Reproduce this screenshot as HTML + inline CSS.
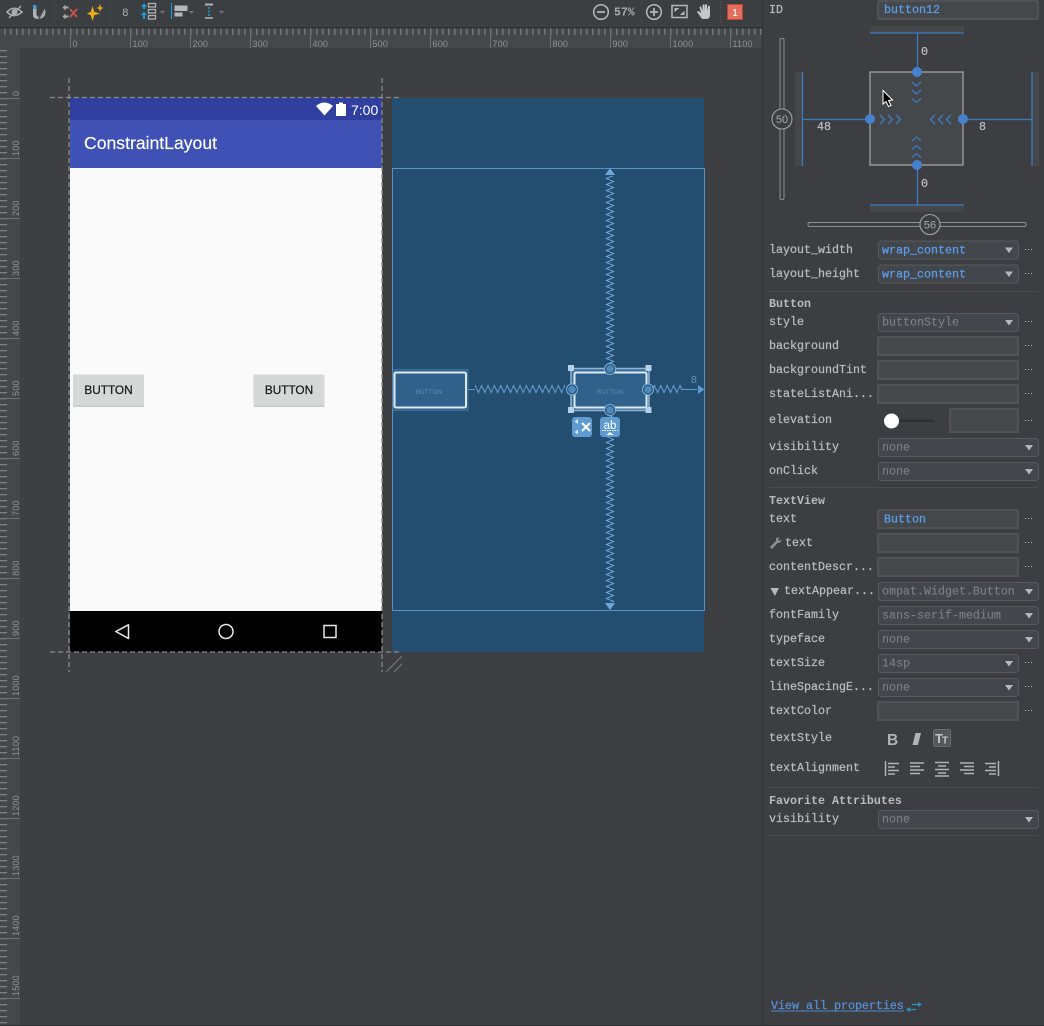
<!DOCTYPE html>
<html><head><meta charset="utf-8"><title>ConstraintLayout</title>
<style>
html,body{margin:0;padding:0;background:#3e3f43;width:1044px;height:1026px;overflow:hidden}
svg{display:block;filter:blur(.3px)}
text{font-family:"Liberation Sans",sans-serif}
.m text,text.m{font-family:"Liberation Mono",monospace;font-size:11.67px}
text.mf{font-family:"Liberation Mono",monospace}
.l{fill:#b9bbbd;stroke:#b9bbbd;stroke-width:.25}
.h{fill:#b9bbbd;font-weight:bold}
.b{fill:#5b9be8;stroke:#5b9be8;stroke-width:.3}
.g{fill:#7b7d7f;stroke:#7b7d7f;stroke-width:.2}
.r{font-size:9px;fill:#8f9294;letter-spacing:.2px}
.dd{fill:#43464a;stroke:#57595b;stroke-width:1}
.in{fill:#45484a;stroke:#505256;stroke-width:2}
.dots{stroke:#b5b7b9;stroke-width:1;stroke-dasharray:1 2}
.sep{stroke:#494b4e;stroke-width:1}
.ic{fill:none;stroke:#b5b7b9;stroke-width:1.5}
.ch{fill:none;stroke:#3f79bf;stroke-width:1.4}
.blue{stroke:#3f79bf;stroke-width:1.3}
</style></head>
<body>
<svg xmlns="http://www.w3.org/2000/svg" width="1044" height="1026" viewBox="0 0 1044 1026">
<defs>
<pattern id="tt" x="4" y="28" width="6" height="20" patternUnits="userSpaceOnUse"><rect x="0" y="0" width="1.5" height="7" fill="#74777a"/></pattern>
<pattern id="tl" x="0" y="2" width="20" height="6" patternUnits="userSpaceOnUse"><rect x="0" y="0" width="7" height="1.3" fill="#7d8082"/></pattern>
<pattern id="zh" x="0" y="384" width="6.4" height="10" patternUnits="userSpaceOnUse"><path d="M0 5 L1.6 1.500 L4.800 8.500 L6.400 5" fill="none" stroke="#6199cd" stroke-width="1.100"/></pattern>
<pattern id="zv" x="605" y="0" width="10" height="6" patternUnits="userSpaceOnUse"><path d="M5 0 L8.500 1.500 L1.500 4.500 L5 6" fill="none" stroke="#6ea6d8" stroke-width="1"/></pattern>
</defs>

<rect width="1044" height="1026" fill="#3e3f43"/>

<!-- toolbar -->
<rect width="763" height="27" fill="#3c3f41"/>
<rect y="27" width="763" height="1.5" fill="#2e3032"/>

<!-- eye -->
<path d="M7 12 Q14 4.5 22 12 Q14 19 7 12Z" fill="none" stroke="#a9abad" stroke-width="1.6"/>
<circle cx="14.500" cy="12" r="3" fill="#a9abad"/>
<path d="M9 18 L21 6" stroke="#a9abad" stroke-width="1.5"/>
<!-- pen -->
<rect x="33" y="5" width="3.500" height="4" fill="#3d9ad6"/>
<path d="M33 9 H36.500 V15 L40 19 Q33 19.500 33 15Z" fill="#b0b2b4"/>
<path d="M38 18.500 L44.500 8 Q46.500 13 44.500 16 Q42 19.500 38 18.500Z" fill="#a6a8aa"/>
<path d="M38.500 19.500 L45.500 6" stroke="#3c3f41" stroke-width="1"/>
<!-- clear constraints -->
<g fill="#a6a8aa"><path d="M62.500 7.500 L65.500 4.500 V6.500 H68.500 V8.500 H65.500 V10.500Z"/><path d="M62.500 16.500 L65.500 13.500 V15.500 H68.500 V17.500 H65.500 V19.500Z"/></g>
<path d="M70 9 L77 17 M77 9 L70 17" stroke="#c75450" stroke-width="1.900"/>
<!-- sparkle -->
<path d="M92.500 6 L94.300 11.700 L100 13.500 L94.300 15.300 L92.500 21 L90.700 15.300 L87 13.500 L90.700 11.700Z" fill="#e8a91c"/>
<path d="M100 4 L101 7 L103.500 8 L101 9 L100 12 L99 9 L96.500 8 L99 7Z" fill="#e8a91c"/>
<text class="mf" x="122" y="16" style="font-size:11px" fill="#b0b2b4">8</text>
<!-- margin list -->
<g fill="#1b9ce0"><path d="M141 7 L144 3 L147 7 H145 V9 H143 V7Z"/><path d="M141 15 L144 11.500 L147 15 H145 V19 H143 V15Z"/></g>
<g fill="none" stroke="#aeb0b2" stroke-width="1.300"><rect x="148.500" y="3.500" width="7" height="3.500"/><rect x="148.500" y="9.500" width="7" height="3.500"/><rect x="148.500" y="15.500" width="7" height="3.500"/></g>
<path d="M160 11 H165 L162.500 13.500Z" fill="#77797b"/>
<!-- align -->
<rect x="171" y="3" width="1" height="16" fill="#1b9ce0"/>
<rect x="174.500" y="5.500" width="13" height="5.500" fill="#b5b7b9"/>
<rect x="174.500" y="12.500" width="8" height="4" fill="#b5b7b9"/>
<path d="M189 11 H194 L191.500 13.500Z" fill="#77797b"/>
<!-- pack -->
<rect x="205" y="3.500" width="8" height="2" fill="#b0b2b4"/>
<rect x="205" y="17" width="8" height="2" fill="#989a9c"/>
<path d="M209 7 V16" stroke="#1b9ce0" stroke-width="1.500" stroke-dasharray="2 1.500"/>
<path d="M219 11 H224 L221.500 13.500Z" fill="#77797b"/>
<g stroke="#515355" stroke-dasharray="1 2"><path d="M54.500 1 V24"/><path d="M110.500 1 V24"/><path d="M720.500 1 V24"/></g>

<!-- zoom tools -->
<circle cx="601" cy="12" r="7.300" class="ic"/><path d="M597 12 H605" stroke="#b5b7b9" stroke-width="1.700"/>
<text class="mf" x="614" y="15.500" style="font-size:11.500px;font-weight:bold" fill="#a9abad">57%</text>
<circle cx="654" cy="12" r="7.300" class="ic"/><path d="M650 12 H658 M654 8 V16" stroke="#b5b7b9" stroke-width="1.700"/>
<rect x="672" y="5.500" width="15" height="12" class="ic"/><path d="M675 11 V8.500 H678Z M684 12 V14.500 H681Z" fill="#b5b7b9" stroke="#b5b7b9"/>
<path d="M700 9 Q699 6 701 6.500 L702.500 11 V5 Q703.500 3.500 704.500 5 V11 L705 4.500 Q706 3.500 707 5 V11 L708 6 Q709 5 710 6.500 V15 Q710 19 706 19 H703.500 Q701.500 19 700 16 L697 12 Q697 10.500 699 11.500 L701 13Z" fill="#c4c6c8"/>
<rect x="727.500" y="4.500" width="15" height="15" fill="#e2705f" stroke="#c4412f"/>
<text x="735" y="16" text-anchor="middle" style="font-size:10.500px" fill="#fff">1</text>

<!-- top ruler -->
<rect y="28.500" width="763" height="19.500" fill="#45484a"/>
<rect y="28.500" width="763" height="7" fill="url(#tt)"/>
<g fill="#6f7274">
<rect x="70" y="28" width="1" height="20"/><rect x="130" y="28" width="1" height="20"/><rect x="190" y="28" width="1" height="20"/><rect x="250" y="28" width="1" height="20"/><rect x="310" y="28" width="1" height="20"/><rect x="370" y="28" width="1" height="20"/><rect x="430" y="28" width="1" height="20"/><rect x="490" y="28" width="1" height="20"/><rect x="550" y="28" width="1" height="20"/><rect x="610" y="28" width="1" height="20"/><rect x="670" y="28" width="1" height="20"/><rect x="730" y="28" width="1" height="20"/>
</g>
<g class="r">
<text class="r" x="72.500" y="47">0</text><text class="r" x="132.500" y="47">100</text><text class="r" x="192.500" y="47">200</text><text class="r" x="252.500" y="47">300</text><text class="r" x="312.500" y="47">400</text><text class="r" x="372.500" y="47">500</text><text class="r" x="432.500" y="47">600</text><text class="r" x="492.500" y="47">700</text><text class="r" x="552.500" y="47">800</text><text class="r" x="612.500" y="47">900</text><text class="r" x="672.500" y="47">1000</text><text class="r" x="732.500" y="47">1100</text>
</g>

<!-- left ruler -->
<rect y="48" width="20" height="978" fill="#45484a"/>
<rect y="48" width="20" height="978" fill="url(#tl)"/>
<g fill="#6f7274">
<rect x="0" y="98" width="20" height="1"/><rect x="0" y="158" width="20" height="1"/><rect x="0" y="218" width="20" height="1"/><rect x="0" y="278" width="20" height="1"/><rect x="0" y="338" width="20" height="1"/><rect x="0" y="398" width="20" height="1"/><rect x="0" y="458" width="20" height="1"/><rect x="0" y="518" width="20" height="1"/><rect x="0" y="578" width="20" height="1"/><rect x="0" y="638" width="20" height="1"/><rect x="0" y="698" width="20" height="1"/><rect x="0" y="758" width="20" height="1"/><rect x="0" y="818" width="20" height="1"/><rect x="0" y="878" width="20" height="1"/><rect x="0" y="938" width="20" height="1"/><rect x="0" y="998" width="20" height="1"/>
</g>
<text class="r" transform="translate(19,96) rotate(-90)">0</text>
<text class="r" transform="translate(19,156) rotate(-90)">100</text>
<text class="r" transform="translate(19,216) rotate(-90)">200</text>
<text class="r" transform="translate(19,276) rotate(-90)">300</text>
<text class="r" transform="translate(19,336) rotate(-90)">400</text>
<text class="r" transform="translate(19,396) rotate(-90)">500</text>
<text class="r" transform="translate(19,456) rotate(-90)">600</text>
<text class="r" transform="translate(19,516) rotate(-90)">700</text>
<text class="r" transform="translate(19,576) rotate(-90)">800</text>
<text class="r" transform="translate(19,636) rotate(-90)">900</text>
<text class="r" transform="translate(19,696) rotate(-90)">1000</text>
<text class="r" transform="translate(19,756) rotate(-90)">1100</text>
<text class="r" transform="translate(19,816) rotate(-90)">1200</text>
<text class="r" transform="translate(19,876) rotate(-90)">1300</text>
<text class="r" transform="translate(19,936) rotate(-90)">1400</text>
<text class="r" transform="translate(19,996) rotate(-90)">1500</text>

<!-- phone -->
<rect x="70" y="98" width="312" height="22" fill="#303f9f"/>
<rect x="70" y="120" width="312" height="48" fill="#3f51b5"/>
<rect x="70" y="168" width="312" height="443" fill="#fafafa"/>
<rect x="70" y="611" width="312" height="41" fill="#000"/>
<path d="M316 106 Q324 99 333 106 L324.500 115.500Z" fill="#fff"/>
<rect x="336" y="104" width="10" height="12" fill="#fff"/><rect x="339" y="102.500" width="4" height="2" fill="#fff"/>
<text x="351" y="115" style="font-size:14px" fill="#fff">7:00</text>
<text x="84" y="149" style="font-size:17.600px" fill="#fff" stroke="#fff" stroke-width=".15">ConstraintLayout</text>

<rect x="73" y="374.500" width="71" height="32.500" rx="1.500" fill="#c8c9c9"/>
<rect x="73" y="374.500" width="71" height="31" rx="1.500" fill="#d6d7d7"/>
<text x="108.500" y="394" text-anchor="middle" style="font-size:11.800px" fill="#1a1a1a" stroke="#1a1a1a" stroke-width=".25">BUTTON</text>
<rect x="253.500" y="374.500" width="71" height="32.500" rx="1.500" fill="#c8c9c9"/>
<rect x="253.500" y="374.500" width="71" height="31" rx="1.500" fill="#d6d7d7"/>
<text x="289" y="394" text-anchor="middle" style="font-size:11.800px" fill="#1a1a1a" stroke="#1a1a1a" stroke-width=".25">BUTTON</text>

<path d="M115.800 631.500 L128.500 624.800 V638.500Z" fill="none" stroke="#e8e8e8" stroke-width="1.500" stroke-linejoin="round"/>
<circle cx="226" cy="631.500" r="7" fill="none" stroke="#e8e8e8" stroke-width="1.500"/>
<rect x="324" y="625.500" width="12" height="12" fill="none" stroke="#e8e8e8" stroke-width="1.500"/>

<!-- blueprint -->
<rect x="392" y="98" width="312" height="554" fill="#234e70"/>
<rect x="392.500" y="168.500" width="312" height="442" fill="none" stroke="#5a92c6" stroke-width="1"/>

<!-- dashed bounds -->
<g stroke="#8a8b8c" stroke-width="1.300" stroke-dasharray="5 3" fill="none">
<path d="M69 78 V672"/><path d="M382 78 V672"/><path d="M50 97.500 H400"/><path d="M50 652 H400"/>
</g>
<path d="M386 672 L402 656 M394 672 L402 664" stroke="#77797b" stroke-width="1" fill="none"/>

<!-- springs -->
<rect x="475" y="384" width="90" height="10" fill="url(#zh)"/>
<path d="M468 389.500 H475" stroke="#6199cd"/>
<rect x="653" y="384" width="29" height="10" fill="url(#zh)"/>
<path d="M682 389.500 H697" stroke="#6199cd"/>
<path d="M698 385 L704.500 389.500 L698 394Z" fill="#5e9bd4"/>
<text x="691" y="383" style="font-size:10.500px" fill="#6d93b5">8</text>
<rect x="605" y="176" width="10" height="188" fill="url(#zv)"/>
<rect x="605" y="416" width="10" height="186" fill="url(#zv)"/>
<path d="M605 175 L610 168 L615 175Z" fill="#6ea6d8"/>
<path d="M605 603 L610 610 L615 603Z" fill="#6ea6d8"/>

<!-- blueprint buttons -->
<rect x="393" y="369.500" width="75" height="41" fill="#2f618b" stroke="#3d719c"/>
<rect x="394.500" y="372.500" width="71.500" height="35" rx="1.500" fill="#2f618b" stroke="#dfe9f2" stroke-width="2"/>
<text x="429" y="394" text-anchor="middle" style="font-size:6.500px" fill="#5f8cb3">BUTTON</text>

<rect x="571" y="368.500" width="78" height="42" fill="#3a6d99" stroke="#8fb5d6" stroke-width="1.500"/>
<rect x="574.500" y="372.500" width="72" height="35" rx="1.500" fill="#2f618b" stroke="#dfe9f2" stroke-width="2"/>
<text x="610" y="394" text-anchor="middle" style="font-size:6.500px" fill="#5f8cb3">BUTTON</text>
<g fill="#b4d2e9"><rect x="568" y="365" width="6" height="6"/><rect x="645.500" y="365" width="6" height="6"/><rect x="568" y="407" width="6" height="6"/><rect x="645.500" y="407" width="6" height="6"/></g>
<g fill="#4f88bb" stroke="#234e70" stroke-width="1.300">
<circle cx="610" cy="369" r="4.500"/><circle cx="572" cy="389.500" r="4.500"/><circle cx="648" cy="389.500" r="4.500"/><circle cx="610" cy="410" r="4.500"/>
</g>
<g fill="none" stroke="#7fb0da" stroke-width="1">
<circle cx="610" cy="369" r="5.500"/><circle cx="572" cy="389.500" r="5.500"/><circle cx="648" cy="389.500" r="5.500"/><circle cx="610" cy="410" r="5.500"/>
</g>
<rect x="572" y="417" width="20" height="20" rx="3" fill="#5f9bd0"/>
<path d="M582 423 L590 431 M590 423 L582 431" stroke="#fff" stroke-width="2"/>
<path d="M574.500 421.500 L578 419 V424Z M574.500 432 L578 429.500 V434.500Z" fill="#d6e6f3"/>
<rect x="600" y="417" width="20" height="20" rx="3" fill="#5f9bd0"/>
<text x="610" y="429" text-anchor="middle" style="font-size:11.500px" fill="#fff">ab</text>
<path d="M602 430.500 H618" stroke="#fff" stroke-dasharray="1.500 1"/>
<path d="M606.500 435 L610 432 L613.500 435Z" fill="#fff"/>

<!-- right panel -->
<rect x="763" y="0" width="281" height="1026" fill="#3c3e42"/>
<rect x="762" y="0" width="1" height="1026" fill="#313335"/>
<rect x="0" y="1025" width="1044" height="1" fill="#2c2e30"/>

<g class="m">
<text class="l" x="769" y="13">ID</text>
<rect class="in" x="878" y="1" width="160" height="18" rx="1.500"/>
<text class="b" x="884" y="13">button12</text>

<text class="l" x="769" y="253">layout_width</text>
<rect class="dd" x="878.500" y="241" width="140" height="18" rx="3"/>
<text class="b" x="882" y="253.500">wrap_content</text>
<text class="l" x="769" y="277">layout_height</text>
<rect class="dd" x="878.500" y="265" width="140" height="18" rx="3"/>
<text class="b" x="882" y="277.500">wrap_content</text>

<text class="h" x="769" y="307">Button</text>
<text class="l" x="769" y="325">style</text>
<rect class="dd" x="878.500" y="313.500" width="140" height="18" rx="3"/>
<text class="g" x="882" y="325.500">buttonStyle</text>
<text class="l" x="769" y="349">background</text>
<rect class="in" x="878" y="337" width="140" height="18"/>
<text class="l" x="769" y="373">backgroundTint</text>
<rect class="in" x="878" y="361" width="140" height="18"/>
<text class="l" x="769" y="397">stateListAni...</text>
<rect class="in" x="878" y="385" width="140" height="18"/>
<text class="l" x="769" y="423">elevation</text>
<rect class="in" x="950" y="409" width="68" height="23"/>
<text class="l" x="769" y="450">visibility</text>
<rect class="dd" x="878.500" y="438.500" width="160" height="18" rx="3"/>
<text class="g" x="882" y="450.500">none</text>
<text class="l" x="769" y="474">onClick</text>
<rect class="dd" x="878.500" y="462.500" width="160" height="18" rx="3"/>
<text class="g" x="882" y="474.500">none</text>

<text class="h" x="769" y="504">TextView</text>
<text class="l" x="769" y="522">text</text>
<rect class="in" x="878" y="510" width="140" height="18"/>
<text class="b" x="884" y="522.500">Button</text>
<text class="l" x="785" y="546">text</text>
<rect class="in" x="878" y="534" width="140" height="18"/>
<text class="l" x="769" y="570">contentDescr...</text>
<rect class="in" x="878" y="558" width="140" height="18"/>
<text class="l" x="784" y="594">textAppear...</text>
<rect class="dd" x="878.500" y="582.500" width="160" height="18" rx="3"/>
<text class="g" x="882" y="594.500">ompat.Widget.Button</text>
<text class="l" x="769" y="618">fontFamily</text>
<rect class="dd" x="878.500" y="606.500" width="160" height="18" rx="3"/>
<text class="g" x="882" y="618.500">sans-serif-medium</text>
<text class="l" x="769" y="642">typeface</text>
<rect class="dd" x="878.500" y="630.500" width="160" height="18" rx="3"/>
<text class="g" x="882" y="642.500">none</text>
<text class="l" x="769" y="666">textSize</text>
<rect class="dd" x="878.500" y="654.500" width="140" height="18" rx="3"/>
<text class="g" x="882" y="666.500">14sp</text>
<text class="l" x="769" y="690">lineSpacingE...</text>
<rect class="dd" x="878.500" y="678.500" width="140" height="18" rx="3"/>
<text class="g" x="882" y="690.500">none</text>
<text class="l" x="769" y="714">textColor</text>
<rect class="in" x="878" y="702" width="140" height="18"/>
<text class="l" x="769" y="741">textStyle</text>
<text class="l" x="769" y="771">textAlignment</text>

<text class="h" x="769" y="804">Favorite Attributes</text>
<text class="l" x="769" y="822">visibility</text>
<rect class="dd" x="878.500" y="810.500" width="160" height="18" rx="3"/>
<text class="g" x="882" y="822.500">none</text>

<text x="771" y="1009" fill="#5590d8" stroke="#5590d8" stroke-width=".25">View all properties</text>
</g>
<rect x="771" y="1010.500" width="133" height="1" fill="#4f86c6"/>
<path d="M912 1004.500 H919" stroke="#2f8fc4" stroke-width="1.300"/>
<path d="M918 1002 L922 1004.500 L918 1007Z" fill="#2f8fc4"/>
<path d="M909 1009.500 H916" stroke="#2f8fc4" stroke-width="1.300"/>
<path d="M910 1007 L906 1009.500 L910 1012Z" fill="#2f8fc4"/>

<!-- separators -->
<path class="sep" d="M769 291.500 H1038 M769 487.500 H1038 M769 787.500 H1038 M769 835.500 H1038"/>

<!-- carets -->
<g fill="#b5b7b9">
<path d="M1005 247.500 H1013 L1009 253Z"/><path d="M1005 271.500 H1013 L1009 277Z"/><path d="M1005 320 H1013 L1009 325.500Z"/>
<path d="M1025 445 H1033 L1029 450.500Z"/><path d="M1025 469 H1033 L1029 474.500Z"/><path d="M1025 589 H1033 L1029 594.500Z"/>
<path d="M1025 613 H1033 L1029 618.500Z"/><path d="M1025 637 H1033 L1029 642.500Z"/><path d="M1005 661 H1013 L1009 666.500Z"/>
<path d="M1005 685 H1013 L1009 690.500Z"/><path d="M1025 817 H1033 L1029 822.500Z"/>
<path d="M770.500 588 H779 L774.800 596Z"/>
</g>
<!-- dots -->
<g class="dots">
<path d="M1025 249.500 H1033"/><path d="M1025 273.500 H1033"/><path d="M1025 321.500 H1033"/><path d="M1025 345.500 H1033"/><path d="M1025 369.500 H1033"/><path d="M1025 393.500 H1033"/><path d="M1025 420.500 H1033"/><path d="M1025 518.500 H1033"/><path d="M1025 542.500 H1033"/><path d="M1025 566.500 H1033"/><path d="M1025 662.500 H1033"/><path d="M1025 686.500 H1033"/><path d="M1025 710.500 H1033"/>
</g>

<!-- wrench -->
<path d="M770 547 L776 541 Q775 538 778 537.500 L779.500 537.500 L778 539.500 L779.500 541 L781.500 539.500 Q781.500 543 777.500 543 L772 549Z" fill="#8e9092"/>

<!-- elevation slider -->
<rect x="898" y="419.500" width="37" height="2.500" fill="#2d2f31"/>
<circle cx="891.500" cy="421" r="7.500" fill="#fff"/>

<!-- text style icons -->
<text x="887" y="745" style="font-size:15.500px;font-weight:bold" fill="#b0b2b4">B</text>
<path d="M912.500 745 L915.500 733 H921 L918 745Z" fill="#b0b2b4"/>
<rect x="933.500" y="729.500" width="17" height="17" rx="2" fill="#55585b" stroke="#6a6c6f"/>
<text x="935" y="743" style="font-size:13px;font-weight:bold" fill="#c4c6c8">T</text>
<text x="942" y="743.500" style="font-size:10px;font-weight:bold" fill="#c4c6c8">T</text>
<!-- alignment icons -->
<g stroke="#b0b2b4" stroke-width="1.500" fill="none">
<path d="M885.500 761 V776 M888 763.500 H899 M888 767 H895 M888 770.500 H899 M888 774 H895"/>
<path d="M910 763 H924 M910 766.500 H920 M910 770 H924 M910 773.500 H920"/>
<path d="M935 762.500 H949 M938 766 H946 M935 769.500 H949 M938 773 H946 M935 776 H949"/>
<path d="M960 763 H974 M964 766.500 H974 M960 770 H974 M964 773.500 H974"/>
<path d="M985 763.500 H996 M989 767 H996 M985 770.500 H996 M989 774 H996 M998.500 761 V776"/>
</g>

<!-- constraint widget -->
<rect x="870" y="26" width="94" height="7" fill="#45484a"/>
<rect x="870" y="205" width="94" height="7" fill="#45484a"/>
<rect x="795" y="72" width="7" height="94" fill="#45484a"/>
<rect x="1032" y="72" width="7" height="94" fill="#45484a"/>
<rect x="870" y="72" width="93" height="93" fill="#45484a" stroke="#a0a2a4" stroke-width="1.300"/>
<g class="blue" fill="none">
<path d="M870 33 H964"/><path d="M870 205 H964"/><path d="M802.500 72 V166"/><path d="M1032 72 V166"/>
<path d="M917.500 33 V72"/><path d="M917.500 165 V205"/><path d="M802 119.500 H870"/><path d="M963 119.500 H1032"/>
</g>
<g fill="#4681d0">
<circle cx="917" cy="72" r="5"/><circle cx="917" cy="165" r="5"/><circle cx="870" cy="119" r="5"/><circle cx="963" cy="119" r="5"/>
</g>
<g class="ch">
<path d="M880 115 L884.500 119.500 L880 124"/><path d="M888 115 L892.500 119.500 L888 124"/><path d="M896 115 L900.500 119.500 L896 124"/>
<path d="M935 115 L930.500 119.500 L935 124"/><path d="M943 115 L938.500 119.500 L943 124"/><path d="M951 115 L946.500 119.500 L951 124"/>
<path d="M912 82 L916.500 86 L921 82"/><path d="M912 90 L916.500 94 L921 90"/><path d="M912 98.500 L916.500 102.500 L921 98.500"/>
<path d="M912 141 L916.500 137 L921 141"/><path d="M912 149.500 L916.500 145.500 L921 149.500"/><path d="M912 157.500 L916.500 153.500 L921 157.500"/>
</g>
<g class="m">
<text class="l" x="921" y="55">0</text>
<text class="l" x="921" y="187">0</text>
<text class="l" x="817" y="130">48</text>
<text class="l" x="979" y="130">8</text>
</g>
<path d="M883 90.500 V104 L886 101.500 L888.500 106.500 L891 105.500 L888.500 100.500 L892.500 100Z" fill="#000" stroke="#fff" stroke-width="1"/>

<rect x="780" y="38.500" width="4" height="161" rx="1.500" fill="#3c3e42" stroke="#8d8f91"/>
<rect x="808" y="222.500" width="218" height="4" rx="1.500" fill="#3c3e42" stroke="#8d8f91"/>
<circle cx="782" cy="119" r="10" fill="#3c3e42" stroke="#a0a2a4" stroke-width="1.100"/>
<text x="782" y="123" text-anchor="middle" style="font-size:11px" fill="#a8aaac">50</text>
<circle cx="930" cy="224.500" r="10" fill="#3c3e42" stroke="#a0a2a4" stroke-width="1.100"/>
<text x="930" y="228.500" text-anchor="middle" style="font-size:11px" fill="#a8aaac">56</text>
</svg>
</body></html>
